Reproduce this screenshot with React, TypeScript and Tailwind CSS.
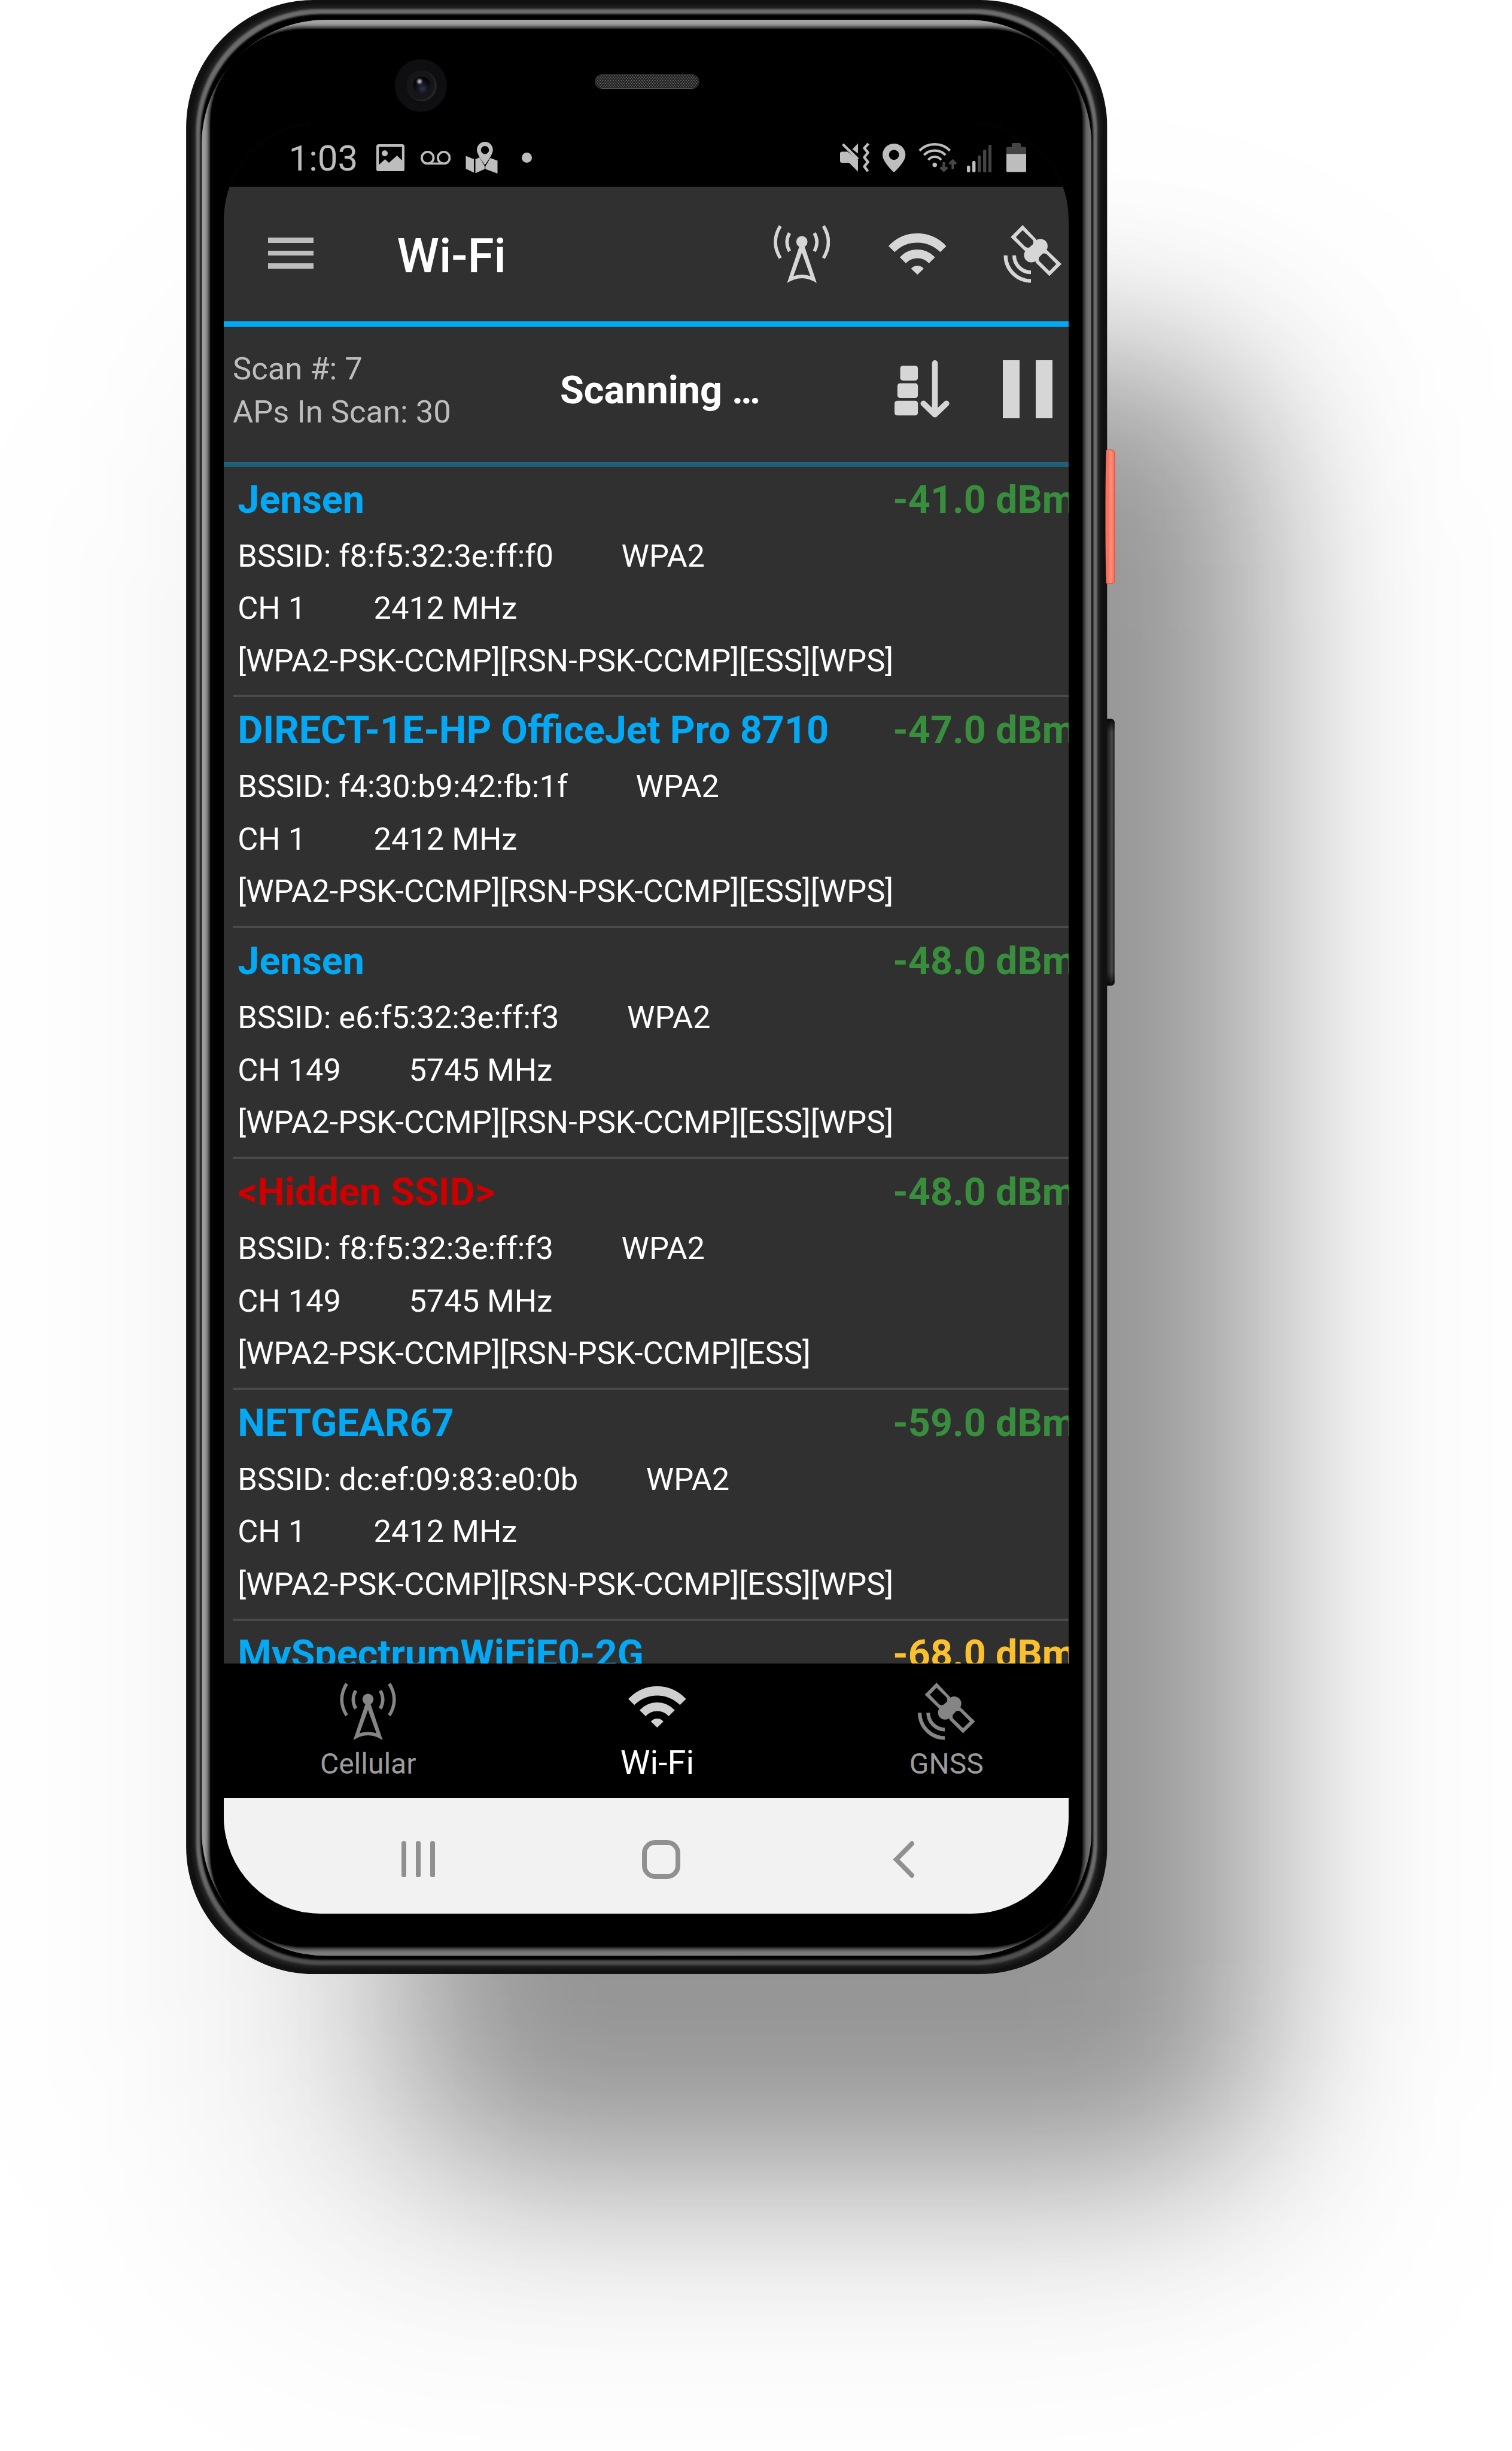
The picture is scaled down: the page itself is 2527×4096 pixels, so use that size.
import React from "react";

type IconProps = { className?: string };

type Network = {
  ssid: string;
  hidden?: boolean;
  signal: string;
  signalClass: string;
  bssid: string;
  channel: string;
  frequency: string;
  capabilities: string;
};

const GREEN = "text-[#388e3c]";
const AMBER = "text-[#fbc02d]";

const networks: Network[] = [
  {
    ssid: "Jensen",
    signal: "-41.0 dBm",
    signalClass: GREEN,
    bssid: "f8:f5:32:3e:ff:f0",
    channel: "CH 1",
    frequency: "2412 MHz",
    capabilities: "[WPA2-PSK-CCMP][RSN-PSK-CCMP][ESS][WPS]",
  },
  {
    ssid: "DIRECT-1E-HP OfficeJet Pro 8710",
    signal: "-47.0 dBm",
    signalClass: GREEN,
    bssid: "f4:30:b9:42:fb:1f",
    channel: "CH 1",
    frequency: "2412 MHz",
    capabilities: "[WPA2-PSK-CCMP][RSN-PSK-CCMP][ESS][WPS]",
  },
  {
    ssid: "Jensen",
    signal: "-48.0 dBm",
    signalClass: GREEN,
    bssid: "e6:f5:32:3e:ff:f3",
    channel: "CH 149",
    frequency: "5745 MHz",
    capabilities: "[WPA2-PSK-CCMP][RSN-PSK-CCMP][ESS][WPS]",
  },
  {
    ssid: "<Hidden SSID>",
    hidden: true,
    signal: "-48.0 dBm",
    signalClass: GREEN,
    bssid: "f8:f5:32:3e:ff:f3",
    channel: "CH 149",
    frequency: "5745 MHz",
    capabilities: "[WPA2-PSK-CCMP][RSN-PSK-CCMP][ESS]",
  },
  {
    ssid: "NETGEAR67",
    signal: "-59.0 dBm",
    signalClass: GREEN,
    bssid: "dc:ef:09:83:e0:0b",
    channel: "CH 1",
    frequency: "2412 MHz",
    capabilities: "[WPA2-PSK-CCMP][RSN-PSK-CCMP][ESS][WPS]",
  },
];

function AntennaIcon({ className }: IconProps) {
  return (
    <svg viewBox="0 0 94.4 97" className={className} fill="none">
      <circle cx="47.2" cy="28" r="9.4" fill="currentColor" />
      <path
        fillRule="evenodd"
        fill="currentColor"
        d="M43.5 34 L22.5 97 Q47.2 81 72 97 L51 34Z M47.2 46 L61.5 85.5 Q47.2 80 33 85.5Z"
      />
      <g stroke="currentColor" strokeWidth="5.6">
        <path d="M26.5 13.5Q18 28.5 26.5 43.8" />
        <path d="M68 13.5Q76.5 28.5 68 43.8" />
        <path d="M11.2 1.8Q-5.4 28.5 11.2 55.4" />
        <path d="M83.2 1.8Q99.8 28.5 83.2 55.4" />
      </g>
    </svg>
  );
}

function WifiIcon({ className }: IconProps) {
  return (
    <svg viewBox="0 0 96.6 69" className={className} fill="currentColor">
      <path d="M0 21.3Q20 0 48.3 0T96.6 21.3L86.4 31.2Q70 15.4 48.3 15.4T10.2 31.2Z" />
      <path d="M18.9 40Q31 27 48.3 27T77.7 40L67.6 50Q60 41.5 48.3 41.5T29 50Z" />
      <path d="M37.8 59Q42 54 48.3 54T58.8 59L48.3 69Z" />
    </svg>
  );
}

function SatelliteIcon({ className }: IconProps) {
  return (
    <svg viewBox="0 0 97 97" className={className} fill="none" stroke="currentColor">
      <g fill="currentColor" stroke="none" fillRule="evenodd">
        <path d="M32.1 0L12.1 20.3L35.3 42.8L46 48L60 36L54.6 23.8ZM32.1 8.7L20.8 20.3L36.6 36.6Q40 38.6 43.4 37.6L49.8 31.8Q50.6 28 49.3 25.3Z" />
        <path d="M97 65.3L76.8 85.3L54.2 63L50 50L62 38L72.8 41.9ZM88.4 65.3L76.8 76.9L59.6 60Q58.6 57 59.4 54.3L65.8 47.8Q69 47 71.9 48.6Z" />
        <circle cx="61.8" cy="35.4" r="12.1" />
        <circle cx="46.6" cy="50.4" r="12.1" />
      </g>
      <path d="M61.8 35.4L46.6 50.4" strokeWidth="21" />
      <path d="M3.6 50.8A42.6 42.6 0 0 0 46 93.4" strokeWidth="6.2" />
      <path d="M18 50.8A28.4 28.4 0 0 0 46 79.2" strokeWidth="6.2" />
    </svg>
  );
}

function SortIcon({ className }: IconProps) {
  return (
    <svg viewBox="0 0 91.7 97" className={className} fill="none">
      <g fill="currentColor">
        <rect x="9.5" y="9.3" width="29.6" height="24.6" rx="4.5" />
        <rect x="4.8" y="38.5" width="34.3" height="24.6" rx="4.5" />
        <rect x="0" y="67.7" width="39.1" height="24.6" rx="4.5" />
      </g>
      <path
        d="M67.5 4.8V90.5M48.3 72.3L67.5 90.8L86.8 72.3"
        stroke="currentColor"
        strokeWidth="9.6"
        strokeLinecap="round"
        strokeLinejoin="round"
      />
    </svg>
  );
}

function PictureIcon({ className }: IconProps) {
  return (
    <svg viewBox="0 0 47 45.5" className={className} fill="currentColor">
      <path
        fillRule="evenodd"
        d="M4 0H43Q47 0 47 4V41.5Q47 45.5 43 45.5H4Q0 45.5 0 41.5V4Q0 0 4 0ZM4.2 4.6V34.5L14.5 25L21 31L34.5 19L42.8 27V4.6Z"
      />
      <circle cx="14" cy="15.2" r="5" />
    </svg>
  );
}

function VoicemailIcon({ className }: IconProps) {
  return (
    <svg viewBox="0 0 50.4 23.4" className={className} fill="none" stroke="currentColor" strokeWidth="3.8">
      <circle cx="11.7" cy="11.7" r="9.8" />
      <circle cx="38.7" cy="11.7" r="9.8" />
      <path d="M11.7 21.5H38.7" />
    </svg>
  );
}

function MapPinIcon({ className }: IconProps) {
  return (
    <svg viewBox="0 0 54 53" className={className} fill="currentColor">
      <path
        fillRule="evenodd"
        d="M32.5 0C25 0 19 6 19 13.5C19 22 32.5 38.5 32.5 38.5S45.8 22 45.8 13.5C45.8 6 40 0 32.5 0ZM32.5 7A6.8 6.8 0 1 1 32.5 20.6A6.8 6.8 0 1 1 32.5 7Z"
      />
      <path d="M.5 23.5L14 29V51.5L.5 45Z" />
      <path d="M16.5 29L23.5 26L32 40.5V45.5L16.5 52.5Z" />
      <path d="M33.2 41L41.5 27L53.5 31.5V53L33.2 45.5Z" />
    </svg>
  );
}

function MutedVibrateIcon({ className }: IconProps) {
  return (
    <svg viewBox="0 0 49 48.3" className={className} fill="none">
      <path
        d="M3 14.5H12.5L30 28V47.8L15 33H3Q0 33 0 30V17.5Q0 14.5 3 14.5ZM30 .5V17.5L20.5 10.5Z"
        fill="currentColor"
      />
      <path d="M4.5 2L30 27" stroke="currentColor" strokeWidth="4.4" />
      <path
        d="M47.3 1L40.5 8.5L46.5 16L40.5 24L46.5 31.7L40.5 39.3L46.5 47.3"
        stroke="currentColor"
        strokeWidth="4.4"
        strokeLinejoin="round"
      />
    </svg>
  );
}

function LocationIcon({ className }: IconProps) {
  return (
    <svg viewBox="0 0 38.3 48" className={className} fill="currentColor">
      <path
        fillRule="evenodd"
        d="M19.1 0C8.3 0 0 8.3 0 18.9C0 31 19.1 48 19.1 48S38.3 31 38.3 18.9C38.3 8.3 30 0 19.1 0ZM19.1 10.4A8.4 8.4 0 1 1 19.1 27.2A8.4 8.4 0 1 1 19.1 10.4Z"
      />
    </svg>
  );
}

function WifiStatusIcon({ className }: IconProps) {
  return (
    <svg viewBox="0 0 64 49" className={className} fill="none" strokeWidth="4.2">
      <g stroke="currentColor">
        <path d="M1.8 12.8Q12 2.2 27.2 2.2T52.6 12.8" />
        <path d="M9.3 20.2Q16 12.6 27.2 12.6T45.1 20.2" />
        <path d="M16.5 28.2Q20.5 23 27.2 23T37.9 28.2" />
      </g>
      <circle cx="27.2" cy="36.6" r="3.8" fill="currentColor" />
      <g stroke="#484848" strokeWidth="4">
        <path d="M42.4 32V46M36.8 40.5L42.4 46L48 40.5" />
        <path d="M57.3 43.5V29.5M51.7 35L57.3 29.5L62.9 35" />
      </g>
    </svg>
  );
}

function SignalIcon({ className }: IconProps) {
  return (
    <svg viewBox="0 0 41.4 46" className={className}>
      <g fill="currentColor">
        <rect x="0" y="34.8" width="5.4" height="11.2" rx="2" />
        <rect x="9" y="27" width="5.4" height="19" rx="2" />
      </g>
      <g fill="#444444">
        <rect x="18" y="17.8" width="5.4" height="28.2" rx="2" />
        <rect x="27" y="8.2" width="5.4" height="37.8" rx="2" />
        <rect x="36" y="0" width="5.4" height="46" rx="2" />
      </g>
    </svg>
  );
}

function BatteryIcon({ className }: IconProps) {
  return (
    <svg viewBox="0 0 33 48.6" className={className}>
      <path d="M11 0H22Q24 0 24 2V6.4H31Q33 6.4 33 8.4V19H0V8.4Q0 6.4 2 6.4H9V2Q9 0 11 0Z" fill="#444444" />
      <path d="M0 18.2H33V46.6Q33 48.6 31 48.6H2Q0 48.6 0 46.6Z" fill="currentColor" />
    </svg>
  );
}

/* Metal frame, glass edge highlights, side keys, camera and earpiece. */
function PhoneFrame() {
  return (
    <svg
      viewBox="358 0 1790 3793"
      className="pointer-events-none absolute top-0 left-0 h-[3299px] w-[1557px]"
      aria-hidden="true"
    >
      <defs>
        <linearGradient id="edge" x1="0" x2="1" y1="0" y2="0">
          <stop offset="0" stopColor="#9c9c9c" />
          <stop offset="0.3" stopColor="#9c9c9c" />
          <stop offset="0.7" stopColor="#707070" />
          <stop offset="1" stopColor="#707070" />
        </linearGradient>
        <linearGradient id="ring" x1="0" x2="0" y1="0" y2="1">
          <stop offset="0" stopColor="#6c6c6c" />
          <stop offset="0.95" stopColor="#6c6c6c" />
          <stop offset="1" stopColor="#4c4c4c" />
        </linearGradient>
        <linearGradient id="redKey" x1="0" x2="1" y1="0" y2="0">
          <stop offset="0" stopColor="#e8604e" />
          <stop offset="0.25" stopColor="#ff7d69" />
          <stop offset="0.7" stopColor="#ff8b78" />
          <stop offset="1" stopColor="#ef6a56" />
        </linearGradient>
        <linearGradient id="blackKey" x1="0" x2="1" y1="0" y2="0">
          <stop offset="0" stopColor="#1a1a1a" />
          <stop offset="0.5" stopColor="#2e2e2e" />
          <stop offset="0.75" stopColor="#4a4a4a" />
          <stop offset="1" stopColor="#1c1c1c" />
        </linearGradient>
        <linearGradient id="keyEnds" x1="0" x2="0" y1="0" y2="1">
          <stop offset="0" stopColor="#000" stopOpacity="0.85" />
          <stop offset="0.05" stopColor="#000" stopOpacity="0" />
          <stop offset="0.95" stopColor="#000" stopOpacity="0" />
          <stop offset="1" stopColor="#000" stopOpacity="0.85" />
        </linearGradient>
        <radialGradient id="lens" cx="0.55" cy="0.7" r="0.55">
          <stop offset="0" stopColor="#2b3450" />
          <stop offset="0.5" stopColor="#141724" />
          <stop offset="1" stopColor="#050507" />
        </radialGradient>
        <pattern id="mesh" width="5" height="6" patternUnits="userSpaceOnUse">
          <rect width="5" height="6" fill="#141414" />
          <circle cx="1.3" cy="1.5" r="1.25" fill="#707070" />
          <circle cx="3.8" cy="4.5" r="1.25" fill="#707070" />
        </pattern>
        <filter id="soft1" x="-5%" y="-5%" width="110%" height="110%">
          <feGaussianBlur stdDeviation="1.6" />
        </filter>
        <filter id="soft2" x="-5%" y="-5%" width="110%" height="110%">
          <feGaussianBlur stdDeviation="4.5" />
        </filter>
        <filter id="glint" x="-60%" y="-60%" width="220%" height="220%">
          <feGaussianBlur stdDeviation="1.6" />
        </filter>
        <clipPath id="bodyClip">
          <rect x="358" y="0" width="1770" height="3793" rx="245" />
        </clipPath>
        <clipPath id="edgeClip">
          <rect x="387.8" y="38" width="1710" height="3720" rx="240" />
        </clipPath>
      </defs>

      <rect x="2122" y="864.5" width="20.3" height="256.5" rx="7" fill="url(#redKey)" />
      <rect x="2122" y="864.5" width="20.3" height="256.5" rx="7" fill="none" stroke="#e8503c" strokeWidth="1.5" />
      <rect x="2122" y="1381" width="20" height="513" rx="7" fill="url(#blackKey)" />
      <rect x="2122" y="1381" width="20" height="513" rx="7" fill="url(#keyEnds)" />

      <g clipPath="url(#bodyClip)">
        <rect x="358" y="0" width="1770" height="3793" fill="#111111" />
        <rect x="372" y="12" width="1742" height="3769" rx="238" fill="#252525" filter="url(#soft2)" />
        <rect x="377" y="17.5" width="1732" height="3758" rx="236" fill="url(#ring)" filter="url(#soft1)" />
        <rect x="385.3" y="27" width="1715.5" height="3739" rx="232" fill="#000" filter="url(#soft1)" />
      </g>

      <path d="M2131 864.5H2126Q2124.5 900 2124.5 992Q2124.5 1085 2126 1121H2131Z" fill="#f9705c" />

      <g clipPath="url(#edgeClip)">
        <rect x="387.8" y="38" width="1710" height="3720" fill="url(#edge)" />
        <rect x="387.8" y="38" width="1710" height="70" fill="#a2a2a2" />
        <rect x="387.8" y="3688" width="1710" height="70" fill="#7c7c7c" />
        <rect x="401.5" y="52" width="1682" height="3692" rx="182" fill="#000" filter="url(#soft2)" />
      </g>
      <rect x="404.3" y="56" width="1676" height="3684.5" rx="180" fill="#000" />

      <ellipse cx="809" cy="164.4" rx="50" ry="50.6" fill="#0f0f11" />
      <ellipse cx="810.7" cy="165" rx="28.8" ry="29.4" fill="#242426" />
      <ellipse cx="808.5" cy="163.5" rx="27" ry="28" fill="#161618" />
      <ellipse cx="810.7" cy="163.7" rx="16.3" ry="16.8" fill="url(#lens)" />
      <circle cx="806.5" cy="156.5" r="4.4" fill="#b4b4b6" filter="url(#glint)" />

      <rect x="1144" y="143.5" width="199" height="26.5" rx="13" fill="url(#mesh)" />
      <rect x="1144" y="143.5" width="199" height="26.5" rx="13" fill="none" stroke="#2a2a2a" strokeWidth="2" />
      <path d="M1156 170.3H1332" stroke="#6a6a6a" strokeWidth="1.5" />
    </svg>
  );
}

function StatusBar() {
  return (
    <div className="flex h-[107px] shrink-0 items-center bg-black pt-[10px] pl-[109px] text-[#bdbdbd]">
      <span className="mt-[3px] w-[146px] text-[60px] leading-[70px]">1:03</span>
      <PictureIcon className="h-[45.5px] w-[47px]" />
      <VoicemailIcon className="ml-[27.5px] h-[23.4px] w-[50.4px]" />
      <MapPinIcon className="ml-[24.5px] h-[53px] w-[54px]" />
      <span className="ml-[40px] h-[17px] w-[17px] rounded-full bg-[#bdbdbd]" />
      <MutedVibrateIcon className="ml-[515px] h-[48.3px] w-[49px]" />
      <LocationIcon className="ml-[22.5px] h-[48px] w-[38.3px]" />
      <WifiStatusIcon className="ml-[21px] h-[49px] w-[64px]" />
      <SignalIcon className="mt-[3px] ml-[17.3px] h-[46px] w-[41.4px]" />
      <BatteryIcon className="ml-[24.5px] h-[48.6px] w-[33px]" />
    </div>
  );
}

function AppHeader() {
  return (
    <header className="flex h-[234px] shrink-0 items-center border-b-[9px] border-[#03a9f4] pl-[74px] text-[#d6d6d6]">
      <button className="-mt-[3px] flex w-[76px] flex-col gap-[13.4px]" aria-label="Open menu">
        <span className="h-[8.2px] bg-[#bdbdbd]" />
        <span className="h-[8.2px] bg-[#bdbdbd]" />
        <span className="h-[8.2px] bg-[#bdbdbd]" />
      </button>
      <h1 className="mt-[7px] ml-[140px] w-[629px] text-[80px] leading-[94px] font-medium text-white">Wi-Fi</h1>
      <AntennaIcon className="h-[97px] w-[94.4px]" />
      <WifiIcon className="ml-[98px] h-[69px] w-[96.6px]" />
      <SatelliteIcon className="ml-[96px] h-[97px] w-[97px]" />
    </header>
  );
}

function ScanBar() {
  return (
    <section className="flex h-[233.7px] shrink-0 items-center border-b-[8px] border-[#1f607b] pb-[12px] pl-[15.5px]">
      <div className="w-[547px] text-[52.5px] leading-[71.4px] text-[#bdbdbd]">
        <p>Scan #: 7</p>
        <p>APs In Scan: 30</p>
      </div>
      <p className="w-[559px] text-[64.7px] leading-[75px] font-bold text-white">Scanning …</p>
      <SortIcon className="-mt-[4px] h-[97px] w-[91.7px] text-[#d6d6d6]" />
      <button className="-mt-[4px] ml-[89.6px] flex h-[97px] gap-[26.8px]" aria-label="Pause scanning">
        <span className="w-[28.2px] bg-[#d6d6d6]" />
        <span className="w-[28.2px] bg-[#d6d6d6]" />
      </button>
    </section>
  );
}

function SsidLine({ ssid, hidden, signal, signalClass }: Pick<Network, "ssid" | "hidden" | "signal" | "signalClass">) {
  return (
    <div className="mb-[13px] flex text-[64.7px] leading-[76px] font-bold whitespace-nowrap">
      <span className={hidden ? "w-[1095px] shrink-0 text-[#cc0000]" : "w-[1095px] shrink-0 text-[#03a9f4]"}>
        {ssid}
      </span>
      <span className={signalClass}>{signal}</span>
    </div>
  );
}

function NetworkRow({ network }: { network: Network }) {
  return (
    <li className="ml-[15.8px] h-[385.8px] shrink-0 border-b-[4px] border-[#4a4a4a] pt-[17px] pl-[8px] text-[52.35px] leading-[87.5px] whitespace-nowrap text-white">
      <SsidLine {...network} />
      <div className="flex gap-[113.5px]">
        <span>BSSID: {network.bssid}</span>
        <span>WPA2</span>
      </div>
      <div className="flex gap-[113.5px]">
        <span>{network.channel}</span>
        <span>{network.frequency}</span>
      </div>
      <div>{network.capabilities}</div>
    </li>
  );
}

function NetworkList() {
  return (
    <ul className="flex h-[2000px] shrink-0 flex-col overflow-hidden">
      {networks.map((network) => (
        <NetworkRow key={network.bssid + network.channel} network={network} />
      ))}
      <li className="ml-[15.8px] pt-[17px] pl-[8px]">
        <SsidLine ssid="MySpectrumWiFiE0-2G" signal="-68.0 dBm" signalClass={AMBER} />
      </li>
    </ul>
  );
}

function BottomNav() {
  return (
    <nav className="grid h-[225.6px] w-[1450px] shrink-0 grid-cols-3 bg-black">
      <div className="flex flex-col items-center pt-[32.7px]">
        <AntennaIcon className="h-[96px] w-[94px] text-[#858585]" />
        <span className="mt-[12px] text-[48px] leading-[56px] text-[#9c9c9c]">Cellular</span>
      </div>
      <div className="flex flex-col items-center pt-[38.3px]">
        <WifiIcon className="h-[69px] w-[96.6px] text-[#cfcfcf]" />
        <span className="mt-[27px] text-[56px] leading-[64px] text-white">Wi-Fi</span>
      </div>
      <div className="flex flex-col items-center pt-[32.7px]">
        <SatelliteIcon className="h-[96px] w-[97px] text-[#858585]" />
        <span className="mt-[12px] text-[48px] leading-[56px] text-[#9c9c9c]">GNSS</span>
      </div>
    </nav>
  );
}

function SystemNav() {
  return (
    <div className="flex h-[193px] shrink-0 items-center bg-[#f2f2f2] pt-[11px] pl-[297.3px]">
      <div className="flex h-[60px] gap-[15.6px]">
        <span className="w-[8.5px] rounded-[3px] bg-[#909090]" />
        <span className="w-[8.5px] rounded-[3px] bg-[#909090]" />
        <span className="w-[8.5px] rounded-[3px] bg-[#909090]" />
      </div>
      <span className="ml-[345.3px] h-[64.6px] w-[64px] rounded-[22px] border-[8.6px] border-[#909090]" />
      <svg viewBox="0 0 36 61" className="ml-[355.3px] h-[61px] w-[36px]" fill="none">
        <path d="M32 4L6 30.5L32 57" stroke="#909090" strokeWidth="8" strokeLinecap="round" />
      </svg>
    </div>
  );
}

export default function App() {
  return (
    <div className="relative h-[4096px] w-[2527px] overflow-hidden bg-white font-['Roboto',sans-serif]">
      <div className="absolute top-[609px] left-[418px] h-[3134px] w-[1739px] rounded-[220px] bg-black/10 blur-[226px]" />
      <div className="absolute top-[600px] left-[690px] h-[3025px] w-[1412px] rounded-[180px] bg-black/35 blur-[138px]" />

      <div className="relative ml-[311px] h-[3299px] w-[1540px] pt-[205px] pl-[62.5px]">
        <PhoneFrame />
        <main className="relative flex h-[2993px] w-[1412.3px] flex-col overflow-hidden rounded-[162px] bg-[#303030]">
          <StatusBar />
          <AppHeader />
          <ScanBar />
          <NetworkList />
          <BottomNav />
          <SystemNav />
        </main>
      </div>
    </div>
  );
}
